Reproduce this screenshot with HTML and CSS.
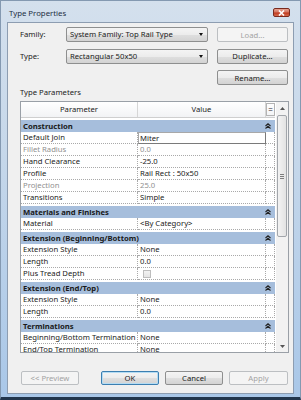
FILE: index.html
```html
<!DOCTYPE html>
<html lang="en">
<head>
  <meta charset="UTF-8" />
  <title>Type Properties</title>
  <link rel="stylesheet" href="styles.css">
</head>
<body>
  <div class="window">
    <div class="titlebar">
      <span class="title">Type Properties</span>
      <span class="close">
        <svg width="7" height="6" viewBox="0 0 7 6"><path d="M1 0.5 L6 5.5 M6 0.5 L1 5.5" stroke="#fff" stroke-width="1.6"/></svg>
      </span>
    </div>

    <div class="client">
      <div class="type-form">
        <span class="lbl">Family:</span>
        <div class="combo">System Family: Top Rail Type<i class="arrow"></i></div>
        <button class="btn" disabled>Load...</button>

        <span class="lbl">Type:</span>
        <div class="combo">Rectangular 50x50<i class="arrow"></i></div>
        <button class="btn">Duplicate...</button>

        <span></span>
        <span></span>
        <button class="btn">Rename...</button>
      </div>

      <div class="caption">Type Parameters</div>

      <div class="grid-box">
        <div class="grid-main">
          <div class="grid-head">
            <span>Parameter</span>
            <span>Value</span>
            <span class="eq">=</span>
          </div>

          <div class="group">Construction<svg class="chev" width="6" height="6" viewBox="0 0 6 6"><path d="M0.5 3 L3 0.8 L5.5 3 M0.5 5.5 L3 3.3 L5.5 5.5" stroke="#222" stroke-width="1.1" fill="none"/></svg></div>
          <div class="row"><span>Default Join</span><span class="edit">Miter</span><span></span></div>
          <div class="row off"><span>Fillet Radius</span><span>0.0</span><span></span></div>
          <div class="row"><span>Hand Clearance</span><span>-25.0</span><span></span></div>
          <div class="row"><span>Profile</span><span>Rail Rect : 50x50</span><span></span></div>
          <div class="row off"><span>Projection</span><span>25.0</span><span></span></div>
          <div class="row"><span>Transitions</span><span>Simple</span><span></span></div>

          <div class="group">Materials and Finishes<svg class="chev" width="6" height="6" viewBox="0 0 6 6"><path d="M0.5 3 L3 0.8 L5.5 3 M0.5 5.5 L3 3.3 L5.5 5.5" stroke="#222" stroke-width="1.1" fill="none"/></svg></div>
          <div class="row"><span>Material</span><span>&lt;By Category&gt;</span><span></span></div>

          <div class="group">Extension (Beginning/Bottom)<svg class="chev" width="6" height="6" viewBox="0 0 6 6"><path d="M0.5 3 L3 0.8 L5.5 3 M0.5 5.5 L3 3.3 L5.5 5.5" stroke="#222" stroke-width="1.1" fill="none"/></svg></div>
          <div class="row"><span>Extension Style</span><span>None</span><span></span></div>
          <div class="row"><span>Length</span><span>0.0</span><span></span></div>
          <div class="row"><span>Plus Tread Depth</span><span><i class="check"></i></span><span></span></div>

          <div class="group">Extension (End/Top)<svg class="chev" width="6" height="6" viewBox="0 0 6 6"><path d="M0.5 3 L3 0.8 L5.5 3 M0.5 5.5 L3 3.3 L5.5 5.5" stroke="#222" stroke-width="1.1" fill="none"/></svg></div>
          <div class="row"><span>Extension Style</span><span>None</span><span></span></div>
          <div class="row"><span>Length</span><span>0.0</span><span></span></div>

          <div class="group">Terminations<svg class="chev" width="6" height="6" viewBox="0 0 6 6"><path d="M0.5 3 L3 0.8 L5.5 3 M0.5 5.5 L3 3.3 L5.5 5.5" stroke="#222" stroke-width="1.1" fill="none"/></svg></div>
          <div class="row"><span>Beginning/Bottom Termination</span><span>None</span><span></span></div>
          <div class="row"><span>End/Top Termination</span><span>None</span><span></span></div>
        </div>

        <div class="scrollbar">
          <div class="sb-btn"><svg width="5" height="3" viewBox="0 0 5 3"><path d="M0 3 L2.5 0 L5 3 Z" fill="#555"/></svg></div>
          <div class="sb-track">
            <div class="sb-thumb"><i></i><i></i><i></i></div>
          </div>
          <div class="sb-btn"><svg width="5" height="3" viewBox="0 0 5 3"><path d="M0 0 L2.5 3 L5 0 Z" fill="#555"/></svg></div>
        </div>
      </div>

      <div class="footer">
        <button class="btn preview" disabled>&lt;&lt; Preview</button>
        <button class="btn default">OK</button>
        <button class="btn">Cancel</button>
        <button class="btn" disabled>Apply</button>
      </div>
    </div>
  </div>
</body>
</html>
```

FILE: styles.css
```css
body {
  margin: 0;
  padding: 0;
  font-family: 'Noto Sans', 'Open Sans', sans-serif;
  font-size: 7.7px;
  color: #1b1b1b;
  background: #fff;
}

.window {
  box-sizing: border-box;
  width: 301px;
  height: 400px;
  display: flex;
  flex-direction: column;
  padding: 0 6px 3px 6px;
  border: 1px solid #8499b1;
  border-bottom: 3px solid #22364d;
  background: linear-gradient(#d4e0ed 0%, #c5d7ea 40%, #a9c7e8 100%);
}

/* title bar */
.titlebar {
  height: 21px;
  display: flex;
  align-items: flex-start;
  justify-content: space-between;
}
.title {
  margin: 8px 0 0 2px;
  font-size: 7.8px;
  line-height: 9px;
  color: #1e2f44;
}
.close {
  margin: 7px 4px 0 0;
  width: 17px;
  height: 9px;
  box-sizing: border-box;
  display: flex;
  align-items: center;
  justify-content: center;
  border: 1px solid #7a2a1e;
  border-radius: 2px;
  background: linear-gradient(#e8a493 0%, #d2715c 45%, #c0391f 55%, #d46a4c 100%);
}

.client {
  flex: 1;
  display: flex;
  flex-direction: column;
  padding: 4px 5px 0 12px;
  border: 1px solid #8d9db1;
  background: #f0f0f0;
}

/* family / type */
.type-form {
  display: grid;
  grid-template-columns: 46px 142px 1fr;
  grid-template-rows: 15px 15px 14px;
  row-gap: 6.5px;
}
.lbl {
  line-height: 15px;
  color: #222;
}
.combo {
  position: relative;
  box-sizing: border-box;
  height: 15px;
  padding-left: 3px;
  line-height: 13px;
  border: 1px solid #8e8f8f;
  border-radius: 2px;
  background: linear-gradient(#f4f4f4 0%, #ececec 50%, #dfdfdf 51%, #d3d3d3 100%);
  white-space: nowrap;
}
.arrow {
  position: absolute;
  right: 4px;
  top: 5px;
  border-left: 2.5px solid transparent;
  border-right: 2.5px solid transparent;
  border-top: 3px solid #111;
}

.btn {
  box-sizing: border-box;
  height: 15px;
  padding: 0;
  font: inherit;
  color: #1b1b1b;
  border: 1px solid #8e8f8f;
  border-radius: 2px;
  background: linear-gradient(#f4f4f4 0%, #ececec 50%, #dfdfdf 51%, #d3d3d3 100%);
}
.btn:disabled {
  color: #a3a3a3;
  border-color: #bcbfc2;
  background: #f4f4f4;
}
.type-form .btn {
  margin-left: 9px;
}

.caption {
  margin-top: 3px;
  line-height: 11px;
  color: #222;
}

/* parameter grid */
.grid-box {
  margin: 3px -1px 0 0;
  height: 252px;
  box-sizing: border-box;
  display: flex;
  border: 1px solid #9aa0a7;
  background: #fff;
}
.grid-main {
  width: 255px;
  overflow: hidden;
}
.grid-head {
  display: grid;
  grid-template-columns: 117px 128px 9px;
  height: 16px;
  box-sizing: border-box;
  border-bottom: 1px solid #cfcfcf;
  background: linear-gradient(#ffffff, #f2f3f5);
  line-height: 15px;
  text-align: center;
}
.grid-head span {
  border-right: 1px solid #d6d6d6;
}
.grid-head .eq {
  margin-top: 1px;
  height: 13px;
  line-height: 12px;
  border: 1px solid #b4b4b4;
  box-sizing: border-box;
  font-size: 8px;
}

.group {
  position: relative;
  width: 254px;
  margin-top: 2px;
  height: 12px;
  box-sizing: border-box;
  padding-left: 2px;
  line-height: 12px;
  font-weight: bold;
  color: #1a1a1a;
  background: #a6bedc;
}
.chev {
  position: absolute;
  right: 4px;
  top: 3px;
}

.row {
  display: grid;
  grid-template-columns: 117px 128px 9px;
  height: 12px;
}
.row span {
  box-sizing: border-box;
  padding-left: 2px;
  line-height: 11px;
  white-space: nowrap;
  overflow: hidden;
  border-bottom: 1px dotted #a9a9a9;
  border-right: 1px dotted #a9a9a9;
}
.row.off span {
  color: #909090;
}
.row .edit {
  border: 1px solid #7a7a7a;
  border-top-color: #a8a8a8;
  border-left-color: #a8a8a8;
  line-height: 10px;
  padding-left: 1px;
}
.check {
  display: inline-block;
  margin: 2px 0 0 3px;
  width: 8px;
  height: 8px;
  box-sizing: border-box;
  border: 1px solid #bdbdbd;
  background: linear-gradient(#f2f2f2, #e4e4e4);
  vertical-align: top;
}

/* scrollbar */
.scrollbar {
  width: 12px;
  margin-left: 1px;
  display: flex;
  flex-direction: column;
  background: #f2f2f2;
}
.sb-btn {
  height: 12px;
  display: flex;
  align-items: center;
  justify-content: center;
}
.sb-track {
  flex: 1;
  padding-top: 1px;
}
.sb-thumb {
  margin: 0 1px;
  height: 122px;
  box-sizing: border-box;
  border: 1px solid #a2a6ab;
  border-radius: 2px;
  background: linear-gradient(90deg, #f3f3f3, #e3e3e3);
  display: flex;
  flex-direction: column;
  align-items: center;
  justify-content: center;
  gap: 1px;
}
.sb-thumb i {
  width: 4px;
  height: 1px;
  background: #7d7d7d;
}

/* dialog buttons */
.footer {
  margin-top: 18px;
  display: flex;
  gap: 6px;
}
.footer .btn {
  width: 58px;
  height: 14px;
}
.footer .preview {
  margin: 0 16px 0 1px;
}
.footer .btn:last-child {
  width: 59px;
}
.btn.default {
  border-color: #3c7fb1;
  box-shadow: inset 0 0 0 1px #b5dcf3;
}
```
